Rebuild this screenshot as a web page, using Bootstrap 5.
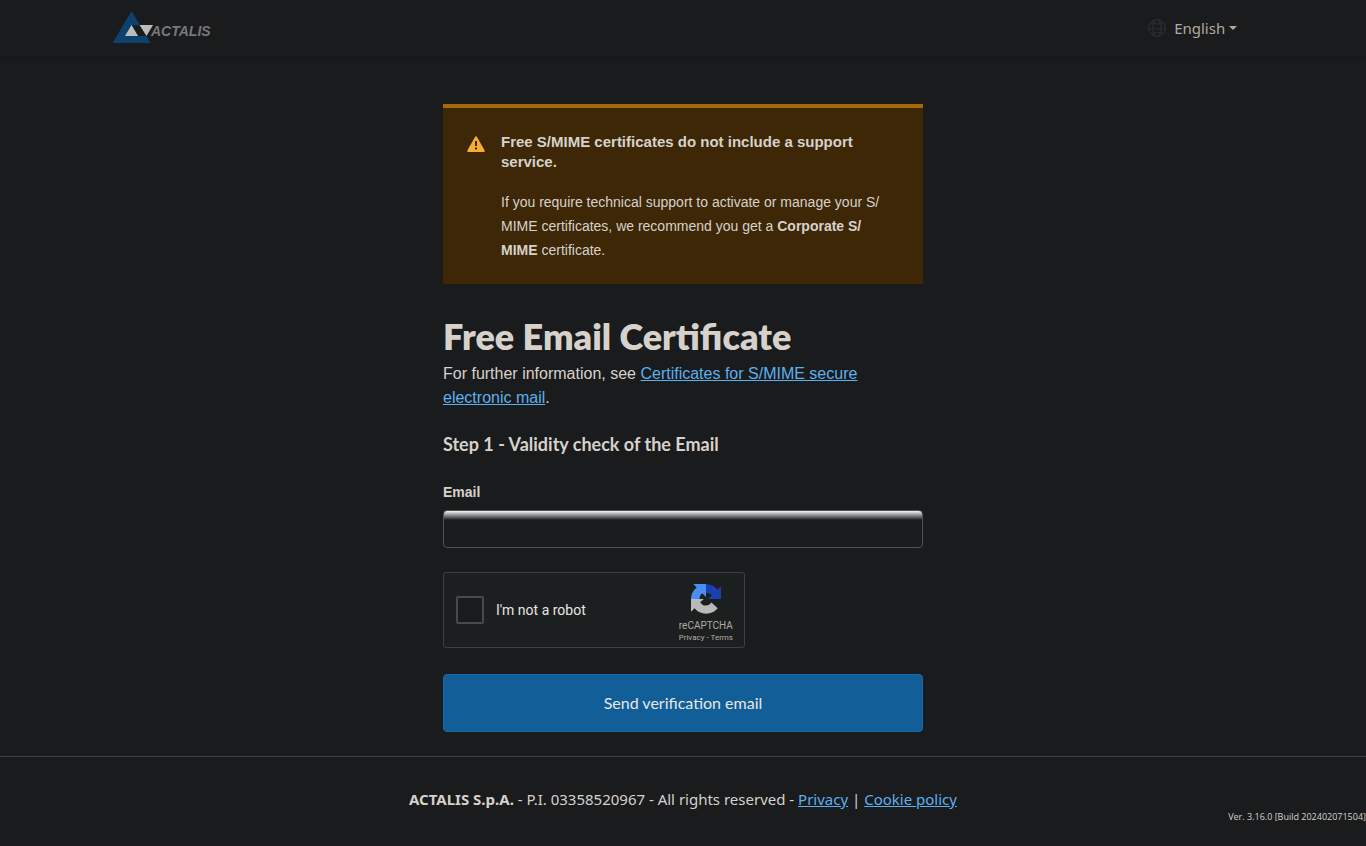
<!DOCTYPE html>
<html lang="en">
<head>
<meta charset="utf-8">
<meta name="viewport" content="width=device-width, initial-scale=1">
<title>Actalis - Free Email Certificate</title>
<link href="https://cdn.jsdelivr.net/npm/bootstrap@5.3.0/dist/css/bootstrap.min.css" rel="stylesheet">
<style>
  body { background: #1a1b1d; color: #d6d2cb; font-family: "Liberation Sans", Arial, sans-serif; font-size: 16px; line-height: 24px; }
  a { color: #5cb0ee; }
  a:hover { color: #8ac8f5; }
  .topbar { background: #1a1b1d; height: 56px; box-shadow: 0 2px 6px rgba(0, 0, 0, .14); }
  .ui-font { font-family: "Noto Sans", "Open Sans", sans-serif; font-size: 15px; }
  .lang-btn { color: #b2a99c; }
  .lang-btn:hover, .lang-btn:focus { color: #d6d2cb; }
  .page-col { max-width: 480px; }
  .notice { background: #3d2706; border-top: 4px solid #a56a05; padding: 24px 32px 22px 24px; gap: 16px; font-size: 14px; }
  .notice-title { font-size: 15px; font-weight: 700; line-height: 20px; margin: 0 0 18px; }
  .display-font { font-family: Lato, sans-serif; font-weight: 800; }
  h1.display-font { font-size: 36px; line-height: 44px; margin: 30px 0 4px; }
  h2.display-font { font-size: 18px; font-weight: 700; line-height: 24px; margin: 22px 0 26px; }
  .field-label { font-size: 14px; font-weight: 700; line-height: 20px; margin-bottom: 8px; }
  .mail-field, .mail-field:focus { height: 38px; background: linear-gradient(#f4f5f5, #1a1b1d) 0 0 / 100% 9px no-repeat #1a1b1d; border: 1px solid #505356; border-radius: 4px; color: #d6d2cb; }
  .captcha { width: 302px; height: 76px; background: #1c1f20; border: 1px solid #3b4042; border-radius: 3px; font-family: Roboto, sans-serif; padding: 0 11px 0 12px; margin-bottom: 26px; }
  .captcha input { appearance: none; width: 28px; height: 28px; border: 2px solid #454b4d; border-radius: 2px; background: #1a1b1d; margin: 0; }
  .captcha input:checked { background: #1558b0; }
  .captcha label { font-size: 14px; color: #e8e6e3; }
  .captcha-brand { font-size: 10px; line-height: 12px; color: #b0aba2; padding-top: 11px; }
  .captcha-brand svg { margin-bottom: 6px; }
  .captcha-terms { font-size: 8px; line-height: 12px; }
  .captcha-terms a { color: inherit; text-decoration: none; }
  .send-btn { background: #115e98; border: 1px solid #126bb0; color: #e8e6e3; height: 58px; border-radius: 4px; font-family: Lato, sans-serif; font-size: 16px; }
  .send-btn:hover { background: #136aab; color: #fff; }
  .page-foot { border-top: 1px solid #3c3f41; padding: 30px 0 20px; }
  .build-no { font-family: "Open Sans", sans-serif; font-size: 9px; line-height: 12px; }
</style>
</head>
<body>
<nav class="topbar">
  <div class="container h-100 d-flex justify-content-between align-items-center px-0">
    <a href="#" aria-label="Actalis home">
      <svg class="d-block" width="102" height="34" viewBox="0 0 102 34">
        <path d="M18.500 0 37.500 32H-.5z" fill="#0d416e"/>
        <path d="M19 14h8l6.500 11H25z" fill="#1a1b1d"/>
        <path d="m18.500 14 6.500 11H12z" fill="#bebdbb"/>
        <path d="M26.500 14H40l-6.500 11z" fill="#bebdbb"/>
        <text x="38" y="25" font-family="Liberation Sans, sans-serif" font-size="14" font-weight="700" font-style="italic" fill="#77777a">ACTALIS</text>
      </svg>
    </a>
    <div class="dropdown d-flex align-items-center me-3">
      <svg class="me-2" width="18" height="18" viewBox="0 0 18 18" fill="none" stroke="#2a2e2f" stroke-width="1.200" aria-hidden="true"><circle cx="9" cy="9" r="8.300"/><path d="M7 1Q2.500 9 7 17M11 1q4.500 8 0 16M.7 10h16.600M3 3.500q6 3 12 0M3 14.500q6-2 12 0"/></svg>
      <button class="btn border-0 p-0 dropdown-toggle lang-btn ui-font" type="button" data-bs-toggle="dropdown" aria-expanded="false">English</button>
      <ul class="dropdown-menu dropdown-menu-dark"><li><a class="dropdown-item" href="#">English</a></li><li><a class="dropdown-item" href="#">Italiano</a></li></ul>
    </div>
  </div>
</nav>

<main class="page-col mx-auto pt-5 pb-4">
  <section class="notice d-flex align-items-start">
    <svg class="flex-shrink-0 mt-1" width="18" height="16" viewBox="0 0 18 16" aria-hidden="true"><path d="M9 1.200 16.800 15H1.200z" fill="#f8ad36" stroke="#f8ad36" stroke-width="2" stroke-linejoin="round"/><path d="M8 5h2v5H8zM8 11.500h2v2H8z" fill="#3d2706"/></svg>
    <div>
      <p class="notice-title">Free S/MIME certificates do not include a support service.</p>
      <p class="mb-0">If you require technical support to activate or manage your S/<wbr>MIME certificates, we recommend you get a <b>Corporate S/<wbr>MIME</b> certificate.</p>
    </div>
  </section>

  <h1 class="display-font">Free Email Certificate</h1>
  <p class="mb-0">For further information, see <a href="#">Certificates for S/MIME secure electronic mail</a>.</p>
  <h2 class="display-font">Step 1 - Validity check of the Email</h2>

  <form>
    <label class="field-label d-block" for="email">Email</label>
    <input class="form-control mail-field mb-4" type="email" id="email">
    <div class="captcha d-flex justify-content-between">
      <div class="d-flex align-items-center">
        <input type="checkbox" id="robot">
        <label class="ps-2 ms-1" for="robot">I'm not a robot</label>
      </div>
      <div class="captcha-brand text-center">
        <svg class="d-block mx-auto" width="30" height="30" viewBox="0 0 64 64" aria-hidden="true">
          <path d="M64 31.950V4.600l-7.500 7.500A32 32 0 0 0 32 0v18.500a14 14 0 0 1 12.500 5.500l-8 8z" fill="#1b3fae"/>
          <path d="M32 0H4.700l7.500 7.500A32 32 0 0 0 0 32h18.500a14 14 0 0 1 5.500-12.500l8 8z" fill="#4a8df3"/>
          <path d="M0 32v27.300l7.500-7.500a32 32 0 0 0 49.500 0L43.500 39.500a14 14 0 0 1-24-.5l8-7z" fill="#b9b9b9"/>
        </svg>
        <div>reCAPTCHA</div>
        <div class="captcha-terms"><a href="#">Privacy</a> - <a href="#">Terms</a></div>
      </div>
    </div>
    <button class="btn send-btn w-100" type="submit">Send verification email</button>
  </form>
</main>

<footer class="page-foot text-center ui-font">
  <div><b>ACTALIS S.p.A.</b> - P.I. 03358520967 - All rights reserved - <a href="#">Privacy</a> | <a href="#">Cookie policy</a></div>
  <div class="build-no text-end">Ver. 3.16.0 [Build 202402071504]</div>
</footer>
<script src="https://cdn.jsdelivr.net/npm/bootstrap@5.3.0/dist/js/bootstrap.bundle.min.js"></script>
</body>
</html>
